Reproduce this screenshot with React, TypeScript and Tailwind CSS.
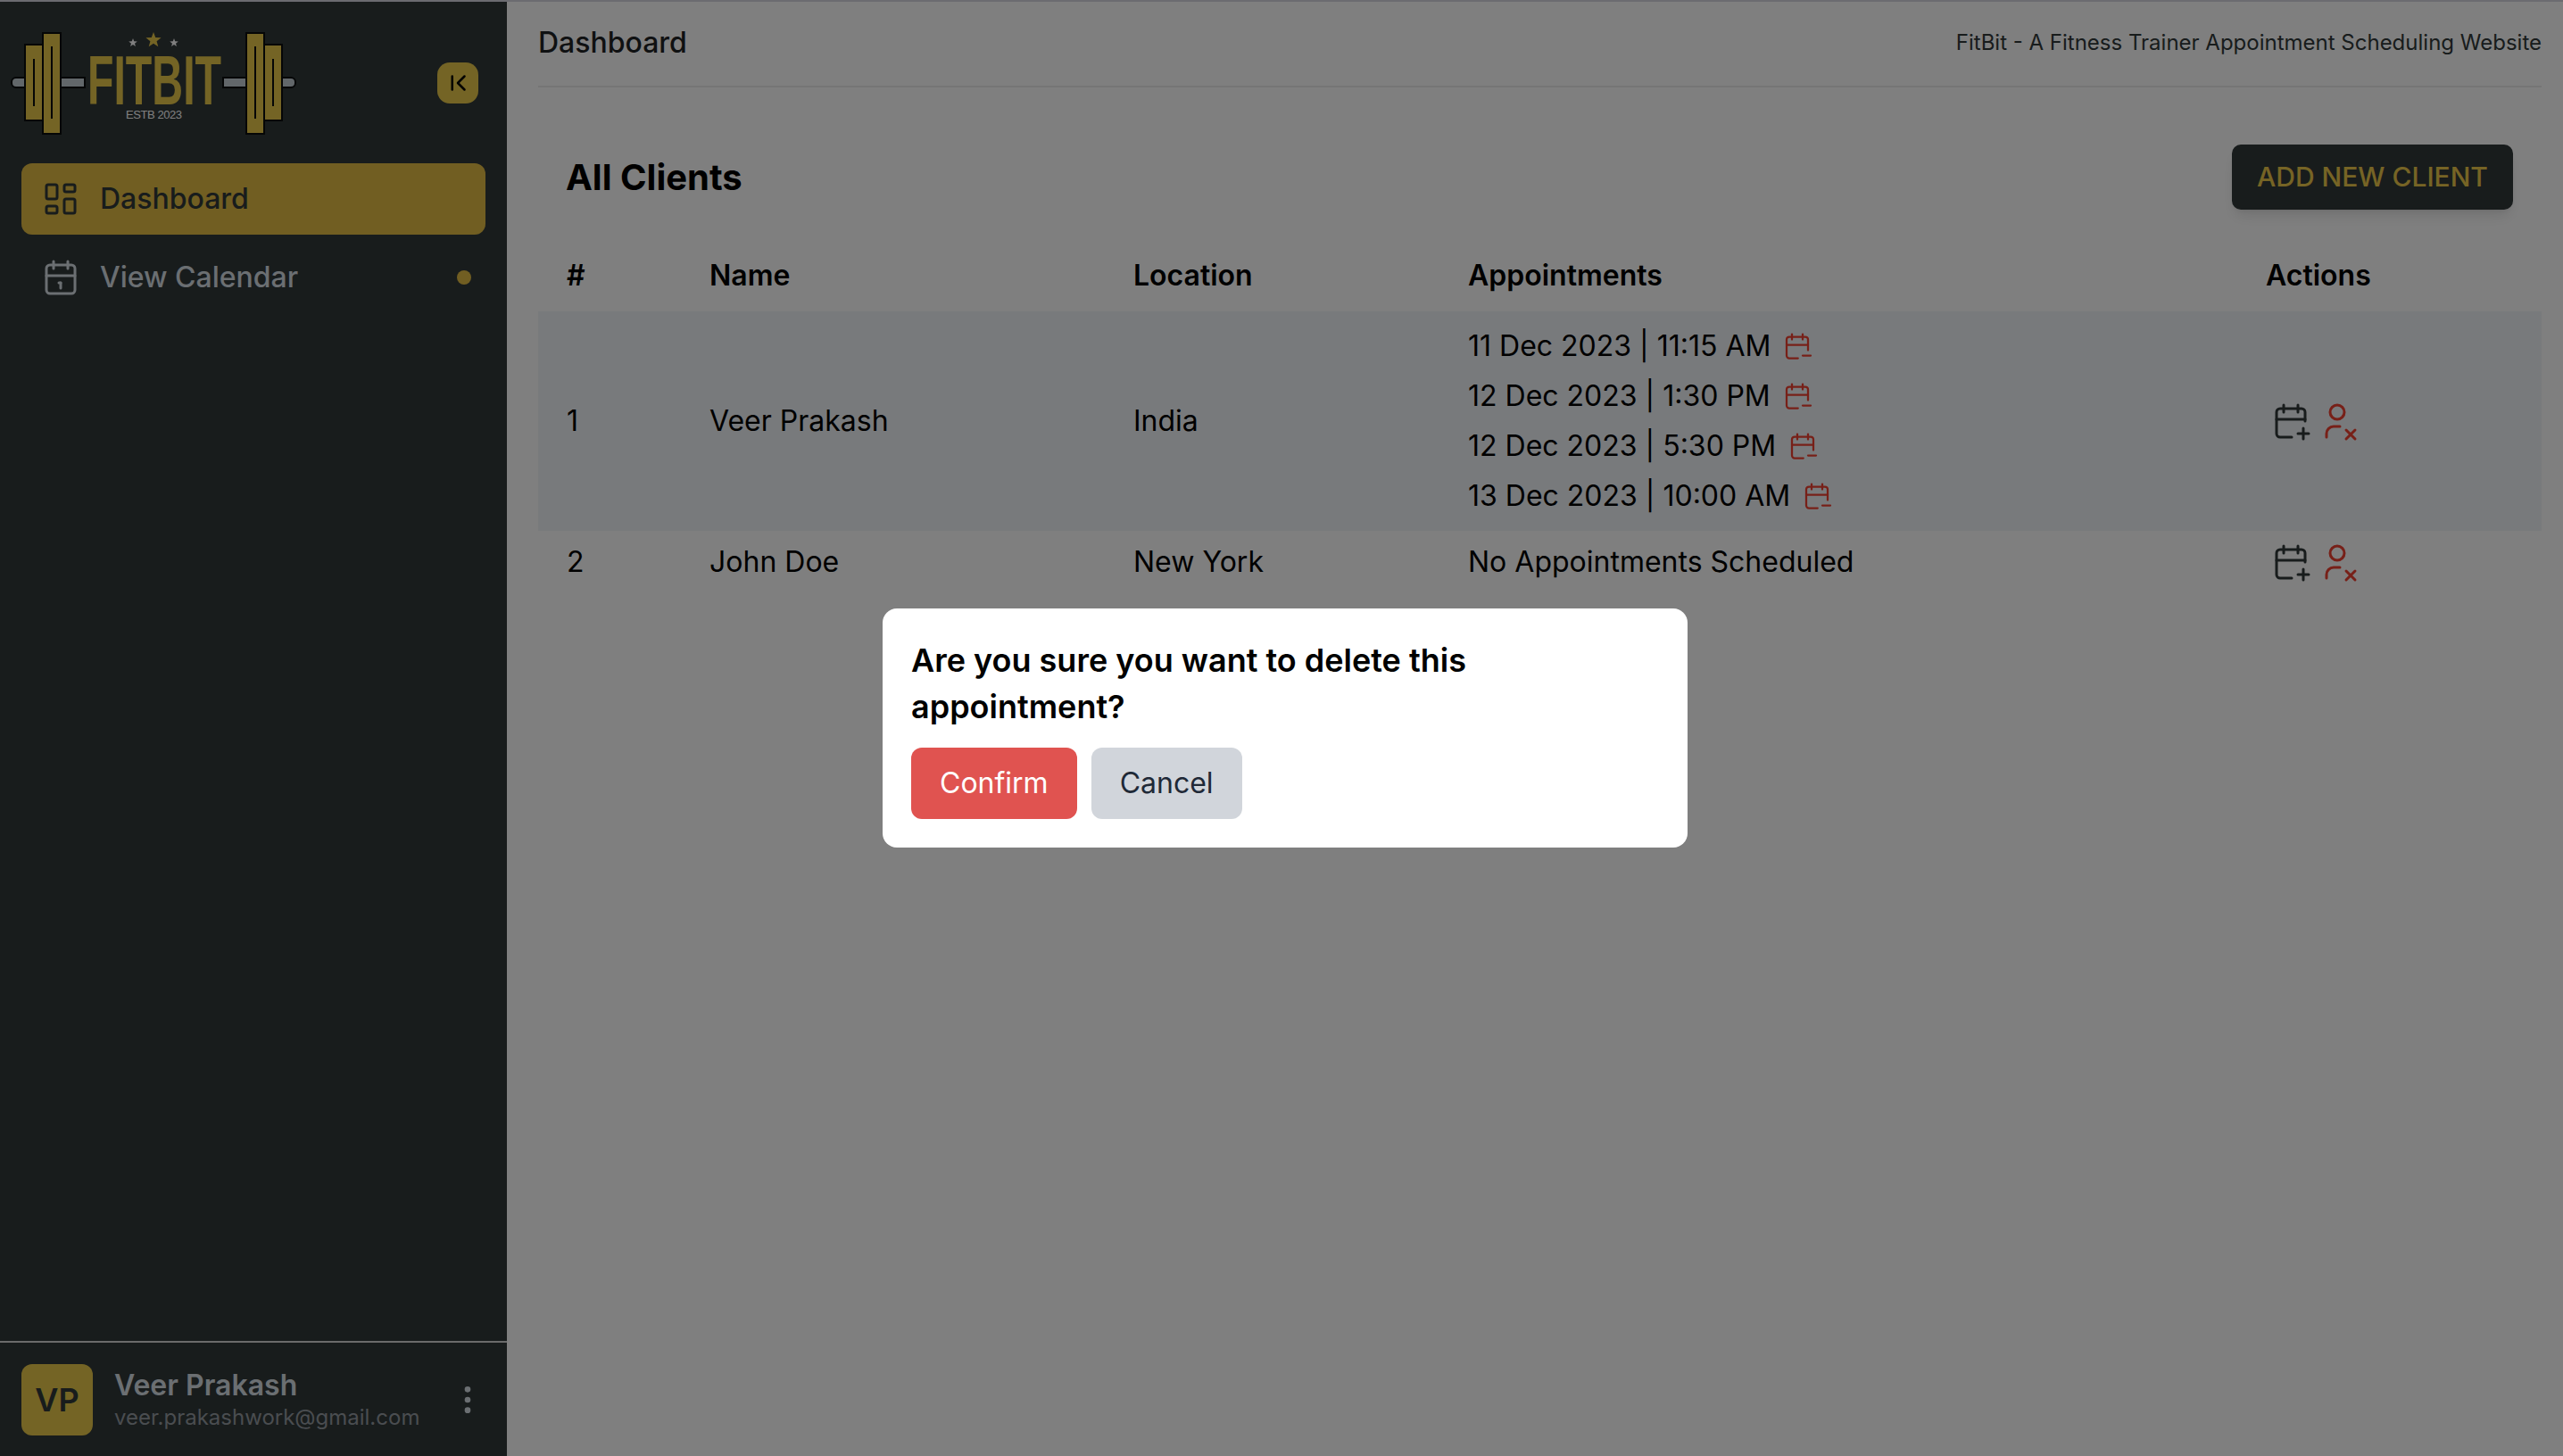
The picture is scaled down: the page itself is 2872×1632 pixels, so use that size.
import {
  TbCalendar,
  TbCalendarMinus,
  TbCalendarPlus,
  TbChevronLeftPipe,
  TbDotsVertical,
  TbLayoutDashboard,
  TbUserX,
} from "react-icons/tb";

type Client = {
  id: number;
  name: string;
  location: string;
  appointments: string[];
};

const clients: Client[] = [
  {
    id: 1,
    name: "Veer Prakash",
    location: "India",
    appointments: [
      "11 Dec 2023 | 11:15 AM",
      "12 Dec 2023 | 1:30 PM",
      "12 Dec 2023 | 5:30 PM",
      "13 Dec 2023 | 10:00 AM",
    ],
  },
  { id: 2, name: "John Doe", location: "New York", appointments: [] },
];

function Star({ cx, cy, r, fill }: { cx: number; cy: number; r: number; fill: string }) {
  const points = Array.from({ length: 10 }, (_, i) => {
    const radius = i % 2 === 0 ? r : r * 0.42;
    const angle = (Math.PI / 5) * i - Math.PI / 2;
    return `${cx + radius * Math.cos(angle)},${cy + radius * Math.sin(angle)}`;
  }).join(" ");
  return <polygon points={points} fill={fill} />;
}

function Logo() {
  const gold = "#e8c84a";
  const steel = "#c4ced4";
  const edge = "#0a0c0d";
  return (
    <svg width="340" height="140" viewBox="20 20 340 140" className="shrink-0">
      <g stroke={edge} strokeWidth="2">
        <rect x="33" y="87" width="20" height="11" rx="5" fill={steel} />
        <rect x="88" y="87" width="27" height="11" fill={steel} />
        <rect x="270" y="87" width="27" height="11" fill={steel} />
        <rect x="332" y="87" width="19" height="11" rx="5" fill={steel} />
        <rect x="48" y="50" width="20" height="85" fill={gold} />
        <rect x="68" y="37" width="20" height="113" fill={gold} />
        <rect x="296" y="37" width="20" height="113" fill={gold} />
        <rect x="316" y="50" width="20" height="85" fill={gold} />
      </g>
      <g fill={edge}>
        <rect x="57" y="66" width="2" height="53" />
        <rect x="77" y="52" width="2" height="81" />
        <rect x="305" y="52" width="2" height="81" />
        <rect x="325" y="66" width="2" height="53" />
      </g>
      <Star cx={192} cy={45} r={9} fill={gold} />
      <Star cx={169} cy={48} r={5} fill="#ffffff" />
      <Star cx={215} cy={48} r={5} fill="#ffffff" />
      <text
        x="118"
        y="117"
        textLength="150"
        lengthAdjust="spacingAndGlyphs"
        fill={gold}
        fontFamily="'Liberation Sans', sans-serif"
        fontWeight="700"
        fontSize="78"
      >
        FITBIT
      </text>
      <text
        x="161"
        y="133"
        textLength="63"
        lengthAdjust="spacing"
        fill="#ffffff"
        fontFamily="'Liberation Sans', sans-serif"
        fontSize="13"
      >
        ESTB 2023
      </text>
    </svg>
  );
}

function Sidebar() {
  return (
    <aside className="flex h-full w-[568px] shrink-0 flex-col bg-[#303839]">
      <div className="flex h-[181px] items-start justify-between pr-[32px] pt-[18px]">
        <Logo />
        <button className="mt-[50px] flex h-[46px] w-[46px] items-center justify-center rounded-[14px] bg-[#e8c84a] text-black">
          <TbChevronLeftPipe size={30} strokeWidth={2} />
        </button>
      </div>
      <nav className="flex flex-col gap-[8px] px-[24px]">
        <a className="flex h-[80px] items-center gap-[20px] rounded-[12px] bg-[#e2bc44] pl-[20px] text-[32px] font-medium text-[#303839]">
          <TbLayoutDashboard size={48} strokeWidth={1.5} />
          Dashboard
        </a>
        <a className="flex h-[80px] items-center gap-[20px] rounded-[12px] pl-[20px] pr-[16px] text-[32px] font-medium text-[#d6dee4]">
          <TbCalendar size={48} strokeWidth={1.5} />
          <span className="flex-1">View Calendar</span>
          <span className="h-[16px] w-[16px] rounded-full bg-[#e2bc44]" />
        </a>
      </nav>
      <div className="mt-auto flex h-[129px] items-center gap-[24px] border-t-2 border-[#d6d6d6] px-[24px]">
        <div className="flex h-[80px] w-[80px] shrink-0 items-center justify-center rounded-[12px] bg-[#e8c84a] text-[36px] font-semibold text-[#303839]">
          VP
        </div>
        <div className="min-w-0 flex-1">
          <p className="text-[32px] font-semibold leading-[40px] text-[#d6dee4]">Veer Prakash</p>
          <p className="text-[24px] leading-[32px] text-[#949aa0]">veer.prakashwork@gmail.com</p>
        </div>
        <TbDotsVertical size={40} strokeWidth={2} className="shrink-0 text-[#d6dee4]" />
      </div>
    </aside>
  );
}

function ClientRow({ client, shaded }: { client: Client; shaded: boolean }) {
  return (
    <tr className={shaded ? "bg-[#f1f4f8]" : ""}>
      <td className="pl-[32px]">{client.id}</td>
      <td>{client.name}</td>
      <td>{client.location}</td>
      <td className="py-[11px]">
        {client.appointments.length === 0 ? (
          "No Appointments Scheduled"
        ) : (
          <ul className="flex flex-col">
            {client.appointments.map((slot) => (
              <li key={slot} className="flex h-[56px] items-center gap-[12px]">
                {slot}
                <TbCalendarMinus size={36} strokeWidth={1.5} className="text-[#ef4030]" />
              </li>
            ))}
          </ul>
        )}
      </td>
      <td className="pl-[4px]">
        <div className="flex items-center gap-[4px]">
          <TbCalendarPlus size={48} strokeWidth={1.5} className="text-[#303839]" />
          <TbUserX size={48} strokeWidth={1.5} className="text-[#ef4030]" />
        </div>
      </td>
    </tr>
  );
}

function ClientsTable() {
  return (
    <table className="w-full table-fixed border-collapse text-left text-[32px] text-black">
      <colgroup>
        <col className="w-[192px]" />
        <col className="w-[475px]" />
        <col className="w-[375px]" />
        <col className="w-[894px]" />
        <col />
      </colgroup>
      <thead>
        <tr className="h-[81px] font-semibold">
          <th className="pl-[32px] font-semibold">#</th>
          <th className="font-semibold">Name</th>
          <th className="font-semibold">Location</th>
          <th className="font-semibold">Appointments</th>
          <th className="font-semibold">Actions</th>
        </tr>
      </thead>
      <tbody>
        {clients.map((client, i) => (
          <ClientRow key={client.id} client={client} shaded={i === 0} />
        ))}
      </tbody>
    </table>
  );
}

function DeleteDialog() {
  return (
    <div className="fixed inset-0 flex items-center justify-center bg-black/50 pl-[8px]">
      <div className="w-[902px] rounded-[16px] bg-white p-[32px]">
        <h2 className="text-[36px] font-semibold leading-[52px] text-black">
          Are you sure you want to delete this appointment?
        </h2>
        <div className="mt-[20px] flex gap-[16px]">
          <button className="h-[80px] rounded-[12px] bg-[#e05350] px-[32px] text-[32px] text-white">
            Confirm
          </button>
          <button className="h-[80px] rounded-[12px] bg-[#d1d5db] px-[32px] text-[32px] text-[#1f2937]">
            Cancel
          </button>
        </div>
      </div>
    </div>
  );
}

export default function App() {
  return (
    <div className="flex h-screen border-t-2 border-[#d6d6e0] bg-white font-['Inter',sans-serif]">
      <Sidebar />
      <main className="min-w-0 flex-1 pl-[35px] pr-[24px]">
        <header className="flex h-[96px] items-center justify-between border-b-2 border-[#eaeaea] pb-[2px]">
          <h1 className="text-[32px] font-medium text-[#1f2225]">Dashboard</h1>
          <p className="text-[24px] text-[#303839]">FitBit - A Fitness Trainer Appointment Scheduling Website</p>
        </header>
        <div className="flex items-center justify-between pl-[31px] pr-[32px] pt-[64px]">
          <h2 className="text-[40px] font-bold text-black">All Clients</h2>
          <button className="flex h-[73px] w-[315px] items-center justify-center rounded-[10px] bg-[#303839] text-[30px] font-medium text-[#ecc84a] shadow-lg">
            ADD NEW CLIENT
          </button>
        </div>
        <div className="mt-[33px]">
          <ClientsTable />
        </div>
      </main>
      <DeleteDialog />
    </div>
  );
}
